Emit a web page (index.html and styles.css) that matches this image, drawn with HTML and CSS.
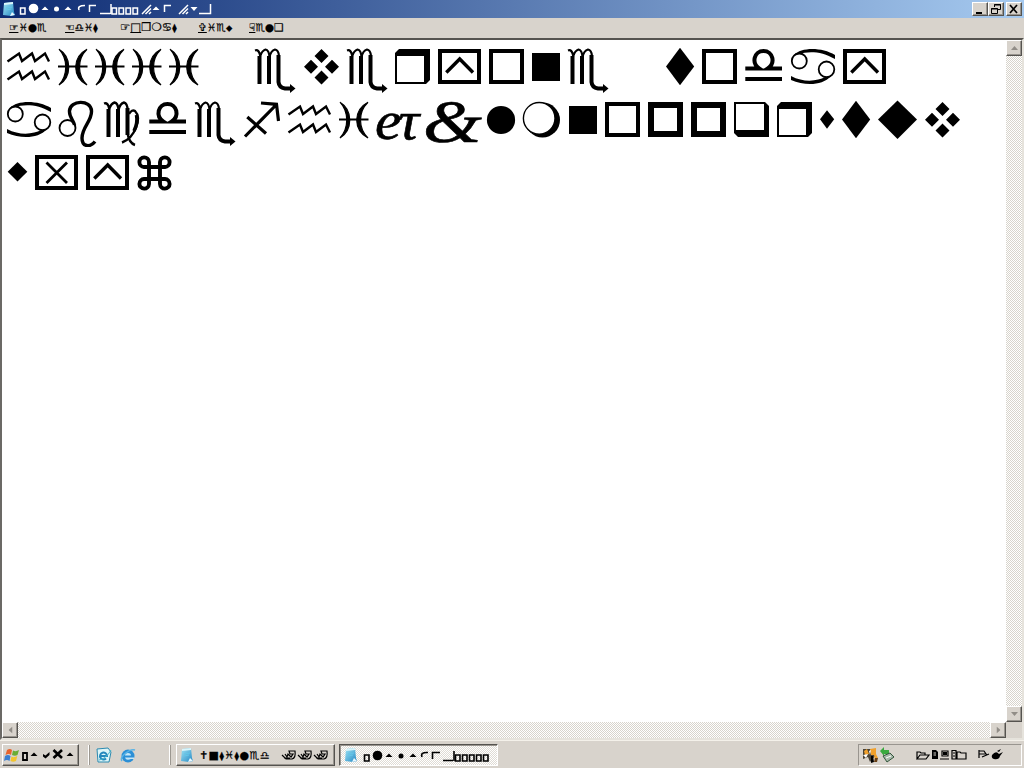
FILE: index.html
```
<!DOCTYPE html>
<html lang="en">

<head>
    <meta charset="UTF-8">
    <meta name="viewport" content="width=device-width, initial-scale=1.0">
    <title>Notepad</title>
    <link rel="stylesheet" href="styles.css">
</head>

<body>
    <svg class="defs" aria-hidden="true">
        <defs>
            <linearGradient id="note-fill" x2="1" y2="1">
                <stop offset="0" stop-color="#9fe4f5"/>
                <stop offset="1" stop-color="#2388c4"/>
            </linearGradient>
            <symbol id="notepad" viewBox="0 0 16 16">
                <path d="M3 2L12 1L13 11L14 14L10 15L2 14Z" fill="url(#note-fill)"/>
                <path d="M3 2L12 1V3L3 4Z" fill="#d9f5fb"/>
                <path d="M9 15L11 11L14 14Z" fill="#e8f8ff"/>
                <path d="M5 7L11 6M5 9L10 8" stroke="#63c6e8"/>
            </symbol>
            <symbol id="ie" viewBox="0 0 16 16">
                <circle cx="8" cy="9" r="6.5" fill="#2b8fd6"/>
                <path d="M5 8.5A3 2.5 0 0 1 11 8.5ZM5 10.5H14V12H11Q6 14 5 10.5Z" fill="#c5e6f7"/>
                <path d="M2 14C-1 10 10 1 15 3" fill="none" stroke="#58b3e6" stroke-width="1.5"/>
            </symbol>
            <symbol id="up" viewBox="0 0 7 4"><path d="M0 4L3.5 0L7 4Z"/></symbol>

            <!-- big symbols, 53px line, baseline box 8..43 -->
            <symbol id="g-h" viewBox="0 0 51 53">
                <path class="ln" stroke-width="2.4" d="M3.5 20.5L15 12.5L18 20L28 12.5L31 20L41 12.5L45 20.5M3.5 38.5L15 30.5L18 38L28 30.5L31 38L41 30.5L45 38.5"/>
            </symbol>
            <symbol id="g-i" viewBox="0 0 37 53">
                <path d="M4 8.2C17 16 17 36 4 44C13 34 13 18 4 8.2ZM32 8.2C17 16 17 36 32 44C22 34 22 18 32 8.2Z" stroke="#000" stroke-width="1.2"/>
                <path class="ln" stroke-width="2" d="M3 25.5H32.5"/>
            </symbol>
            <symbol id="g-e" viewBox="0 0 48.5 53">
                <path class="ln" stroke-width="4" d="M7.5 43V15M17 43V15M26.5 14V41Q27 46.5 33 47.5H39"/>
                <path class="ln" stroke-width="2.2" d="M3 9.5Q7 8 8.3 15Q10 9.5 13.5 8.5Q17 9 17.5 16Q19 9.5 23 8.5Q26.5 9 27 15"/>
                <path d="M38 43L43.5 47.5L38 52Z"/>
            </symbol>
            <symbol id="g-a" viewBox="0 0 52 53">
                <g class="ln" stroke-width="1.8"><circle cx="11.3" cy="20" r="7.5"/><circle cx="38.5" cy="28.3" r="7.8"/></g>
                <path d="M6 14C13 6 34 6 47 14V18C34 10 20 10 11 13ZM3 35C16 42 30 40 37 36L43 35C34 45 17 45 3 39Z"/>
            </symbol>
            <symbol id="g-b" viewBox="0 0 45 53">
                <circle class="ln" stroke-width="1.8" cx="11.5" cy="34" r="8"/>
                <path class="ln" stroke-width="3.4" d="M18.5 31C18 27 13 23 13.5 17C14 6 35 5 35.5 17C36 27 26 33 26 44C26 54 35 53 39 47.5"/>
            </symbol>
            <symbol id="g-c" viewBox="0 0 45 53">
                <path class="ln" stroke-width="4" d="M7.5 43V15M17 43V15M26.5 14V41"/>
                <path class="ln" stroke-width="2.4" d="M3 9.5Q7 8 8.3 15Q10 9.5 13.5 8.5Q17 9 17.5 16Q19 9.5 23 8.5Q26.5 9 27 18M28 20Q31 15 34 17C41 24 34 44 21 48.5M26.5 39Q28 49 34 51"/>
                <path class="ln" stroke-width="3.5" d="M35.5 21Q37 29 33 37"/>
            </symbol>
            <symbol id="g-d" viewBox="0 0 46 53">
                <path class="ln" stroke-width="4" d="M3.3 27.6H17.5C9 22 12 10 21.5 10S34 22 25.5 27.6H40M3.3 37.9H40"/>
            </symbol>
            <symbol id="g-f" viewBox="0 0 44 53">
                <path class="ln" stroke-width="3.2" d="M4 42.5L35.5 10.5M20 9L35.5 10.3L37.5 27M6.3 23L25 39.5"/>
            </symbol>
            <symbol id="g-l" viewBox="0 0 36 53"><circle cx="17" cy="26" r="14.1"/></symbol>
            <symbol id="g-m" viewBox="0 0 46 53">
                <circle cx="22.5" cy="26" r="17.5"/>
                <circle cx="19.2" cy="24.3" r="15.8" fill="#fff" stroke="#000" stroke-width="1.4"/>
            </symbol>
            <symbol id="g-n" viewBox="0 0 36 53"><path d="M3 12H31V40H3Z"/></symbol>
            <symbol id="g-o" viewBox="0 0 43 53"><path class="ln" stroke-width="4" d="M5 10H36V41H5Z"/></symbol>
            <symbol id="g-p" viewBox="0 0 43 53"><path class="ln" stroke-width="6" d="M6 11H35V40H6Z"/></symbol>
            <symbol id="g-q" viewBox="0 0 43 53"><path fill-rule="evenodd" d="M3 8H34L38 12V43H7L3 39ZM5 10V36H33V10Z"/></symbol>
            <symbol id="g-r" viewBox="0 0 43 53"><path fill-rule="evenodd" d="M7 8H38V39L34 43H3V12ZM5 15V41H32V15Z"/></symbol>
            <symbol id="g-s" viewBox="0 0 22 53"><path d="M10 16.2L17.2 25.3L10 34.7L3 25.3Z"/></symbol>
            <symbol id="g-t" viewBox="0 0 36 53"><path d="M17 6.8L31.2 25.5L17 44.3L3 25.5Z"/></symbol>
            <symbol id="g-u" viewBox="0 0 47 53"><path d="M22.5 6.5L42 25.5L22.5 45L3 25.5Z"/></symbol>
            <symbol id="g-v" viewBox="0 0 43 53"><path d="M20.5 8L27.5 15L20.5 22L13.5 15ZM10 18.8L17 25.8L10 32.8L3 25.8ZM31 18.8L38 25.8L31 32.8L24 25.8ZM20.5 29.4L27.5 36.4L20.5 43.4L13.5 36.4Z"/></symbol>
            <symbol id="g-w" viewBox="0 0 28 53"><path d="M13.5 15L23.3 24.8L13.5 34.6L3.7 24.8Z"/></symbol>
            <symbol id="g-x" viewBox="0 0 51 53"><path class="ln" stroke-width="4" d="M5 10H44V41H5Z"/><path class="ln" stroke-width="2.8" d="M14.5 15.5L35 36M35 15.5L14.5 36"/></symbol>
            <symbol id="g-y" viewBox="0 0 51 53"><path class="ln" stroke-width="4" d="M5 10H44V41H5Z"/><path class="ln" stroke-width="3.4" d="M11.3 31.5L24.7 18L38 31.5"/></symbol>
            <symbol id="g-z" viewBox="0 0 43 53"><path class="ln" stroke-width="3.9" d="M15 20H10A4.8 4.8 0 1 1 15 15V37A4.8 4.8 0 1 1 10 32H31A4.8 4.8 0 1 1 26 37V15A4.8 4.8 0 1 1 31 20Z"/></symbol>
        </defs>
    </svg>

    <header class="titlebar">
        <svg class="icon"><use href="#notepad"/></svg>
        <svg class="caption" viewBox="0 0 196 16">
            <g fill="#fff">
                <circle cx="15.5" cy="7.5" r="4.8"/>
                <path d="M23.5 9L27 5.5L30.5 9ZM46.5 9L50 5.5L53.5 9ZM134.5 9L138 5.5L141.5 9ZM172.5 6L176 10L179.5 6Z"/>
                <circle cx="38.5" cy="8" r="2.5"/>
            </g>
            <g fill="none" stroke="#fff" stroke-width="1.5">
                <path d="M2.5 7H7V13H2.5ZM61 9Q59 4.5 67 4.5M71.5 11V4.5H78M82 12.5H92.5M93 3V13"/>
                <path d="M94 7H98.5V13H94ZM101 7H105.5V13H101ZM108 7H112.5V13H108ZM115 7H119.5V13H115Z"/>
                <path d="M124 13L133 4M127.5 13L133 7.5M131 13L133 11M146.5 11V4.5H153M161 13L170 4M164.5 13L170 7.5M168 13L170 11M181 12.5H192.5V3"/>
            </g>
        </svg>
        <div class="controls">
            <button class="win-btn" aria-label="Minimize"><svg viewBox="0 0 16 14"><path d="M4 10H10V12H4Z"/></svg></button>
            <button class="win-btn" aria-label="Restore"><svg viewBox="0 0 16 14"><path class="ln" d="M6.5 5V2.5H12.5V7.5H10M6 3H13M3.5 6.5H9.5V11.5H3.5ZM3 7H10"/></svg></button>
            <button class="win-btn close" aria-label="Close"><svg viewBox="0 0 16 14"><path class="ln" stroke-width="1.7" d="M4 3L11 11M11 3L4 11"/></svg></button>
        </div>
    </header>

    <nav class="menu">
        <span class="m-file"><u>☞</u>♓●♏</span>
        <span class="m-edit"><u>☜</u>♎♓<small>⧫</small></span>
        <span class="m-format">☞<u>□</u>❒❍♋<small>⧫</small></span>
        <span class="m-view"><u>✞</u>♓♏<small>⬥</small></span>
        <span class="m-help"><u>☟</u>♏●❑</span>
    </nav>

    <main class="editor">
        <div class="page">
            <div class="line" data-text="hiiii everyone today"></div>
            <div class="line" data-text="abcdefhijklmnoppqrstuv"></div>
            <div class="line" data-text="wxyz"></div>
        </div>
        <div class="scroll vertical">
            <button class="scroll-btn"><svg><use href="#up"/></svg></button>
            <button class="scroll-btn down"><svg><use href="#up"/></svg></button>
        </div>
        <div class="scroll horizontal">
            <button class="scroll-btn left"><svg><use href="#up"/></svg></button>
            <button class="scroll-btn right"><svg><use href="#up"/></svg></button>
        </div>
        <div class="corner"></div>
    </main>

    <footer class="taskbar">
        <button class="start">
            <svg class="icon" viewBox="0 0 16 16">
                <path d="M3 3Q6 1 8 3L7 8Q5 6 1.5 8Z" fill="#e8642c"/>
                <path d="M9 3.5Q12 5 15 3L13.5 8Q11 9.5 8 8Z" fill="#69ad35"/>
                <path d="M1 9Q4 7 6.5 9L5.5 14Q3 12 0 14Z" fill="#3b7fd0"/>
                <path d="M7.5 9.5Q10 11 13.3 9L12 14Q9 15.5 6.5 14Z" fill="#f2c52e"/>
            </svg>
            <svg class="start-text" viewBox="0 0 56 16">
                <path class="ln" stroke-width="1.8" d="M2 6H6V13H2Z"/>
                <path d="M9.5 9L13 5.5L16.5 9ZM22 7L24.5 8.5L28.5 5V8L24.5 11.5L22 9.5ZM45.5 9L49 5.5L52.5 9Z"/>
                <path class="ln" stroke-width="2.6" d="M32.5 3L41 11M41 3L32.5 11"/>
            </svg>
        </button>
        <i class="sep"></i>
        <div class="quick">
            <svg class="icon" viewBox="0 0 16 16"><path d="M1 2L12 1L15 5L13 15H2Z" fill="#dcf5f8" stroke="#2c8ab0"/><path d="M4 9H11A3.5 3.5 0 1 0 10 11.5" fill="none" stroke="#2488bd" stroke-width="2"/><path d="M3 13Q10 12 15 3" fill="none" stroke="#48b6cb"/></svg>
            <svg class="icon"><use href="#ie"/></svg>
        </div>
        <i class="sep"></i>
        <button class="task">
            <svg class="icon"><use href="#notepad"/></svg>
            <span class="task-text">✝■<small>⧫</small>♓<small>⧫</small>●♏♎</span>
            <svg class="disks" viewBox="0 0 48 12">
                <g class="ln" stroke-width="1.2">
                    <path d="M1 6L5 10H11Q15 9 14 2H8L9 5H12L10 8L7 5L6 8L4 5M3 9H9"/>
                    <path d="M17 6L21 10H27Q31 9 30 2H24L25 5H28L26 8L23 5L22 8L20 5M19 9H25"/>
                    <path d="M33 6L37 10H43Q47 9 46 2H40L41 5H44L42 8L39 5L38 8L36 5M35 9H41"/>
                </g>
            </svg>
        </button>
        <button class="task active">
            <svg class="icon"><use href="#notepad"/></svg>
            <svg class="task-caption" viewBox="0 0 130 16">
                <circle cx="15.5" cy="7.5" r="4.8"/><circle cx="39" cy="8" r="2.5"/>
                <path d="M23.5 9L27 5.5L30.5 9ZM47.5 9L51 5.5L54.5 9Z"/>
                <g class="ln" stroke-width="1.6"><path d="M2.5 7H7V13H2.5ZM60 9Q58 4 66 4.5M70.5 11V4.5H78M81 12.5H91M92 3V13"/><path d="M93.5 7H98V13H93.5ZM100.5 7H105V13H100.5ZM107.5 7H112V13H107.5ZM114.5 7H119V13H114.5ZM121.5 7H126V13H121.5Z"/></g>
            </svg>
        </button>
        <div class="tray">
            <svg class="tray-icons" viewBox="0 0 36 18">
                <path d="M2 3H11L15 9L9 16L7 11L2 13Z" fill="#4a4438"/>
                <path d="M3 5L6 3L8 8L4 9ZM9 3L15 2L15 8L17 12L14 14L13 9L10 9Z" fill="#f0a02c"/>
                <path d="M2 9L7 8L5 12ZM8 5L10 4L9 9Z" fill="#fff"/>
                <path d="M10 10L12 10L13 16L10 17Z" fill="#000"/>
                <path d="M14 12L17 12L16 16L13 16Z" fill="#684016"/>
                <path d="M19 5L23 1V4H28V8H23V10Z" fill="#39aa3e"/>
                <path d="M22 10L29 7L33 11L26 16Z" fill="#a8b9aa" stroke="#31543a"/><path d="M25 12L30 10" stroke="#fff"/>
            </svg>
            <svg class="clock" viewBox="0 0 88 14">
                <g class="ln" stroke-width="1.2">
                    <path d="M2 11V4H5L6 5H10V7M2 11L5 7H14L11 11ZM27 3H33V8H27ZM25 11H34M37 2.5H41V11H37ZM38 5H40M38 8H40M42 11V4H45L46 5H51V11Z"/>
                    <path d="M64 2V10M64 3H69L71 6H64M67 9L74 6"/>
                </g>
                <path d="M17 2H21L23 4V11H17ZM28 4H32V7H28ZM77 7Q81 2 84 6L88 4L85 8Q84 12 79 11Q76 10 77 7ZM82 3L86 1L84 4Z"/>
                <path d="M18.5 5H21M18.5 7H21" stroke="#d6d2ca"/>
            </svg>
        </div>
    </footer>

    <script>
        // advance width of every symbol on the page
        const widths = {
            a: 52, b: 45, c: 45, d: 46, e: 48.5, f: 44, h: 51, i: 37, l: 36, m: 46, n: 36, o: 43,
            p: 43, q: 43, r: 43, s: 22, t: 36, u: 47, v: 43, w: 28, x: 51, y: 51, z: 43
        };
        const ligatures = { j: 'eτ', k: '&amp;' };

        document.querySelectorAll('.line').forEach(function (line) {
            let html = '';
            for (const ch of line.dataset.text) {
                if (ch === ' ') {
                    html += '<span class="space"></span>';
                } else if (ligatures[ch]) {
                    html += '<span class="lig lig-' + ch + '"><b>' + ligatures[ch] + '</b></span>';
                } else {
                    html += '<svg width="' + widths[ch] + '" height="53"><use href="#g-' + ch + '"/></svg>';
                }
            }
            line.innerHTML = html;
        });
    </script>
</body>

</html>
```
FILE: styles.css
```
* {
    box-sizing: border-box;
}
body {
    margin: 0;
    width: 1024px;
    height: 768px;
    overflow: hidden;
    display: flex;
    flex-direction: column;
    background-color: #d8d3cc;
    font-family: "DejaVu Sans", sans-serif;
    color: #000;
}
svg {
    display: block;
    flex: none;
}
button {
    padding: 0;
    border: 1px solid;
    border-color: #fff #55534f #55534f #fff;
    background-color: #d8d3cc;
    box-shadow: inset -1px -1px #99958f;
}
.defs {
    position: absolute;
    width: 0;
    height: 0;
}
.ln {
    fill: none;
    stroke: #000;
}
.icon {
    width: 16px;
    height: 16px;
}
.titlebar {
    height: 18px;
    display: flex;
    align-items: center;
    padding: 0 2px 0 1px;
    background: linear-gradient(to right, #0c2a72, #a6caf0);
}
.caption {
    width: 196px;
    height: 16px;
    margin-left: 1px;
}
.controls {
    display: flex;
    margin-left: auto;
}
.win-btn {
    width: 16px;
    height: 14px;
}
.win-btn svg {
    width: 16px;
    height: 14px;
    margin: -1px;
}
.close {
    margin-left: 2px;
}
.menu {
    height: 20px;
    display: flex;
    padding-left: 9px;
    font-size: 10.5px;
    line-height: 19px;
    white-space: nowrap;
    -webkit-text-stroke: 0.2px #000;
}
.menu span {
    flex: none;
}
small {
    font-size: 9px;
}
.m-file {
    width: 56px;
}
.m-edit {
    width: 55px;
}
.m-format {
    width: 78px;
    font-size: 11.5px;
}
.m-view {
    width: 51px;
}
.editor {
    height: 702px;
    display: grid;
    grid-template-columns: 1fr 16px;
    grid-template-rows: 1fr 16px;
    border-top: 2px solid #55534f;
    border-left: 2px solid #6b6965;
    border-right: 2px solid #e6e3dc;
    border-bottom: 2px solid #e6e3dc;
}
.page {
    background-color: #fff;
    padding: 1px 0 0 2px;
}
.line {
    height: 53px;
    display: flex;
}
.space {
    width: 49px;
}
.lig {
    height: 53px;
    line-height: 53px;
    font-family: "Liberation Serif", serif;
    font-style: italic;
    white-space: nowrap;
}
.lig b {
    display: inline-block;
    font-weight: normal;
    transform-origin: 0 50%;
    -webkit-text-stroke: 0.6px #000;
}
.lig-j {
    width: 49px;
    font-size: 54px;
}
.lig-j b {
    letter-spacing: -3px;
    transform: translate(2px, 1px) scaleX(1.1);
}
.lig-k {
    width: 62px;
    font-size: 62px;
}
.lig-k b {
    transform: translate(1px, 1px) scaleX(1.22);
}
.scroll {
    display: flex;
    justify-content: space-between;
    background: repeating-conic-gradient(#fff 0 25%, #d8d4cc 0 50%) 0 0 / 2px 2px;
}
.vertical {
    flex-direction: column;
}
.scroll-btn {
    width: 16px;
    height: 16px;
    display: flex;
    align-items: center;
    justify-content: center;
}
.scroll-btn svg {
    width: 7px;
    height: 4px;
    fill: #918d87;
}
.down svg {
    transform: rotate(180deg);
}
.left svg {
    transform: rotate(-90deg);
}
.right svg {
    transform: rotate(90deg);
}
.taskbar {
    height: 28px;
    display: flex;
    align-items: center;
    padding: 2px 2px 1px;
    border-top: 1px solid #f4f1ea;
}
.start {
    width: 77px;
    height: 22px;
    display: flex;
    align-items: center;
    padding-left: 1px;
}
.start-text {
    width: 56px;
    height: 16px;
    margin-left: 1px;
}
.sep {
    width: 2px;
    height: 20px;
    margin: 0 5px 0 9px;
    border-left: 1px solid #fff;
    border-right: 1px solid #9b9790;
}
.quick {
    width: 65px;
    display: flex;
    gap: 8px;
    padding-left: 1px;
}
.task {
    width: 159px;
    height: 22px;
    display: flex;
    align-items: center;
    padding-left: 2px;
    font-family: inherit;
    font-size: 11px;
    white-space: nowrap;
}
.task-text {
    width: 76px;
    margin-left: 4px;
    text-align: left;
    letter-spacing: 0.4px;
    -webkit-text-stroke: 0.2px #000;
}
.disks {
    width: 48px;
    height: 12px;
    margin-left: 6px;
}
.active {
    margin-left: 4px;
    border-color: #55534f #fff #fff #55534f;
    box-shadow: inset 1px 1px #99958f;
    background: repeating-conic-gradient(#fff 0 25%, #dfdbd4 0 50%) 0 0 / 2px 2px;
}
.active .icon {
    margin-left: 1px;
}
.task-caption {
    width: 130px;
    height: 16px;
    margin: 2px 0 0 3px;
}
.tray {
    width: 164px;
    height: 22px;
    display: flex;
    align-items: center;
    margin-left: auto;
    padding-left: 2px;
    border: 1px solid;
    border-color: #99958f #fff #fff #99958f;
}
.tray-icons {
    width: 36px;
    height: 18px;
}
.clock {
    width: 88px;
    height: 14px;
    margin-left: 18px;
}
```
